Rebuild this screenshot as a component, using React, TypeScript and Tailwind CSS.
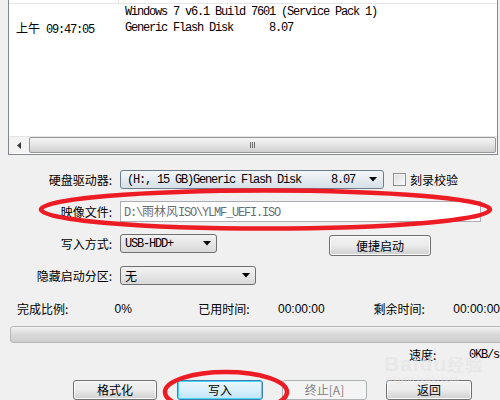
import React from "react";

const mono = "font-['Liberation_Mono','Noto_Sans_CJK_SC',monospace] text-[12px] tracking-[-1.2px]";
const cjk = "font-['Noto_Sans_CJK_SC',sans-serif] text-[12px]";

function Arrow() {
  return (
    <svg width="8" height="5" viewBox="0 0 8 5" className="shrink-0">
      <polygon points="0,0 8,0 4,4.5" fill="#000" />
    </svg>
  );
}

function Label({ text }: { text: string }) {
  return (
    <div className={`w-[112px] shrink-0 text-right text-black leading-[16px] ${cjk}`}>{text}</div>
  );
}

function Btn({ text, w, variant }: { text: string; w: string; variant?: "default" | "disabled" | "primary" }) {
  const base = "flex items-center justify-center rounded-[3px] border h-[20px] leading-none";
  const cls =
    variant === "primary"
      ? "border-[#3c7fb1] bg-gradient-to-b from-[#eaf6fd] via-[#d9f0fc] to-[#bee6fd] shadow-[inset_0_0_0_1px_#48d5ff] text-black"
      : variant === "disabled"
      ? "border-[#adb2b5] bg-[#f4f4f4] text-[#838383]"
      : "border-[#707070] bg-gradient-to-b from-[#f2f2f2] via-[#ebebeb] to-[#cfcfcf] shadow-[inset_0_0_0_1px_#fcfcfc] text-black";
  return <div className={`${base} ${cls} ${w} ${cjk}`}>{text}</div>;
}

export default function App() {
  return (
    <div className="relative w-[500px] h-[400px] overflow-hidden bg-[#f0f0f0]">
      {/* list box */}
      <div className="ml-[8px] w-[490px] h-[155px] border border-t-0 border-[#828790] bg-white flex flex-col">
        <div className="h-[4px] flex border-b border-[#e5e5e5]">
          <div className="w-[110px] border-r border-[#e5e5e5]" />
        </div>
        <div className={`flex-1 text-black ${mono}`}>
          <div className="h-[16px] leading-[16px] pl-[116px] whitespace-pre">Windows 7 v6.1 Build 7601 (Service Pack 1)</div>
          <div className="h-[16px] leading-[16px] flex whitespace-pre">
            <span className="pl-[7px] w-[116px]">
              <span className={`${cjk} tracking-normal`}>上午</span> 09:47:05
            </span>
            <span>Generic Flash Disk      8.07</span>
          </div>
        </div>
        <div className="h-[17px] flex border-t border-[#e5e5e5] bg-[#f3f3f3] mb-[1px]">
          <div className="w-[20px] flex items-center justify-center">
            <svg width="4" height="7" viewBox="0 0 4 7">
              <polygon points="4,0 4,7 0,3.5" fill="#3a3a3a" />
            </svg>
          </div>
          <div className="flex-1 mr-[1px] rounded-[2px] border border-[#979797] bg-gradient-to-b from-[#f4f4f4] via-[#e4e4e4] to-[#cfcfcf] flex items-center justify-center">
            <div className="flex gap-[1px] ml-[-20px]">
              <div className="w-[1px] h-[6px] bg-[#6b6b6b]" />
              <div className="w-[1px] h-[6px] bg-[#6b6b6b]" />
              <div className="w-[1px] h-[6px] bg-[#6b6b6b]" />
            </div>
          </div>
        </div>
      </div>

      {/* drive row */}
      <div className="mt-[15px] flex items-center h-[19px]">
        <Label text="硬盘驱动器:" />
        <div className="ml-[8px] w-[264px] h-[19px] rounded-[3px] border border-[#6d7d8c] bg-gradient-to-b from-[#f4f7fa] to-[#d6e0e8] flex items-center pl-[6px] pr-[6px] justify-between">
          <span className={`text-black whitespace-pre ${mono}`}>(H:, 15 GB)Generic Flash Disk     8.07</span>
          <Arrow />
        </div>
        <div className="ml-[9px] w-[13px] h-[13px] border border-[#8f8f8f] bg-gradient-to-br from-[#dcdcdc] to-[#fbfbfb] shadow-[inset_0_0_0_1px_#f4f4f4]" />
        <span className={`ml-[4px] text-black ${cjk}`}>刻录校验</span>
      </div>

      {/* image row */}
      <div className="mt-[12px] flex items-center h-[21px]">
        <Label text="映像文件:" />
        <div className="ml-[8px] w-[361px] h-[21px] border border-[#abadb3] bg-white flex items-center pl-[3px]">
          <span className={`text-[#6d6d6d] whitespace-pre ${mono}`}>
            D:\<span className={`${cjk} tracking-normal`}>雨林风</span>ISO\YLMF_UEFI.ISO
          </span>
        </div>
      </div>

      {/* write method row */}
      <div className="mt-[12px] flex items-start h-[22px]">
        <div className="h-[19px] flex items-center"><Label text="写入方式:" /></div>
        <div className="ml-[8px] w-[97px] h-[19px] rounded-[3px] border border-[#707070] bg-gradient-to-b from-[#f2f2f2] to-[#d9d9d9] flex items-center justify-between pl-[4px] pr-[5px]">
          <span className={`text-black ${mono}`}>USB-HDD+</span>
          <Arrow />
        </div>
        <div className="ml-[112px] mt-[1px]">
          <Btn text="便捷启动" w="w-[102px] h-[21px]" />
        </div>
      </div>

      {/* hidden partition row */}
      <div className="mt-[10px] flex items-center h-[19px]">
        <Label text="隐藏启动分区:" />
        <div className="ml-[8px] w-[136px] h-[19px] rounded-[3px] border border-[#707070] bg-gradient-to-b from-[#f2f2f2] to-[#dadada] flex items-center justify-between pl-[4px] pr-[5px]">
          <span className={`text-black ${cjk}`}>无</span>
          <Arrow />
        </div>
      </div>

      {/* progress text */}
      <div className="mt-[16px] h-[16px] flex items-center text-black whitespace-nowrap">
        <span className={`ml-[17px] w-[99px] ${cjk}`}>完成比例:</span>
        <span className="w-[85px] font-['Liberation_Sans',sans-serif] text-[12px]">0%</span>
        <span className={`w-[81px] ${cjk}`}>已用时间:</span>
        <span className="w-[97px] font-['Liberation_Sans',sans-serif] text-[12px]">00:00:00</span>
        <span className={`w-[81px] ${cjk}`}>剩余时间:</span>
        <span className="font-['Liberation_Sans',sans-serif] text-[12px]">00:00:00</span>
      </div>

      {/* progress bar */}
      <div className="mt-[9px] ml-[10px] w-[500px] h-[17px] rounded-[3px] border border-[#b5b5b5] bg-gradient-to-b from-[#f3f3f3] via-[#d9d9d9] to-[#cecece]" />

      {/* speed row */}
      <div className="mt-[4px] h-[16px] flex items-center text-black whitespace-nowrap">
        <span className={`ml-[409px] w-[60px] ${cjk}`}>速度:</span>
        <span className={mono}>0KB/s</span>
      </div>

      {/* buttons */}
      <div className="mt-[17px] flex">
        <div className="ml-[73px]"><Btn text="格式化" w="w-[84px]" /></div>
        <div className="ml-[20px]"><Btn text="写入" w="w-[86px]" variant="primary" /></div>
        <div className="ml-[19px]"><Btn text="终止[A]" w="w-[85px]" variant="disabled" /></div>
        <div className="ml-[19px]"><Btn text="返回" w="w-[86px]" /></div>
      </div>

      {/* watermark */}
      <div className="absolute left-[384px] top-[353px] text-[#e6e6e6] opacity-70 pointer-events-none flex flex-col items-start">
        <span className="font-['Liberation_Sans',sans-serif] font-bold text-[21px] leading-[21px] tracking-[1px]">
          Baidu<span className={`${cjk} text-[17px] font-bold`}>经验</span>
        </span>
        <span className="font-['Liberation_Sans',sans-serif] text-[9px] leading-[10px] ml-[2px]">jingyan.baidu.com</span>
      </div>

      {/* red annotation ellipses */}
      <svg className="absolute left-0 top-0 pointer-events-none" width="500" height="400" viewBox="0 0 500 400">
        <ellipse cx="265.5" cy="209.5" rx="224.5" ry="19" fill="none" stroke="#ed1c24" strokeWidth="4.5" />
        <ellipse cx="226" cy="392" rx="61" ry="20" fill="none" stroke="#ed1c24" strokeWidth="4.5" />
      </svg>
    </div>
  );
}
